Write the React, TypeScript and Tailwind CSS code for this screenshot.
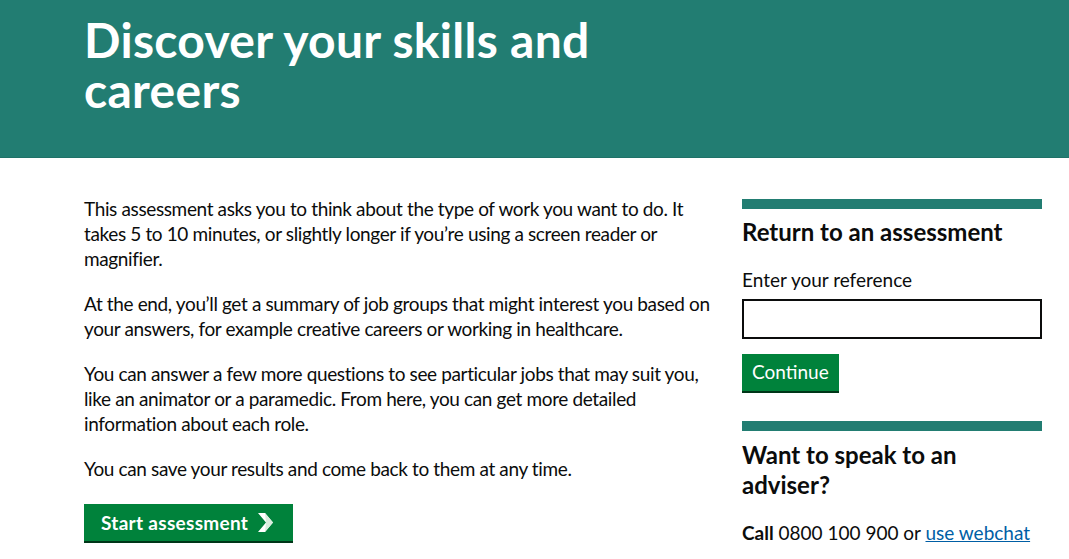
import React from "react";

const font = { fontFamily: "Lato, 'Liberation Sans', Arial, sans-serif" };

function Chevron() {
  return (
    <svg width="17" height="21" viewBox="0 0 17 21" className="ml-[9px]">
      <path d="M1 1 L8 1 L16 10.5 L8 20 L1 20 L9 10.5 Z" fill="#ffffff" />
      <path d="M8 1 L16 10.5 L8 20 L9 10.5 Z" fill="#d9eedf" />
    </svg>
  );
}

export default function App() {
  return (
    <div className="min-h-[559px] bg-white text-[#0b0c0c]" style={font}>
      <header className="h-[158px] bg-[#227d72] border-b border-[#1f7268] pl-[84px] pt-[15px]">
        <h1 className="text-[48px] font-bold leading-[50px] text-white tracking-[0.3px]">
          Discover your skills and
          <br />
          careers
        </h1>
      </header>
      <main className="flex pl-[84px] pt-[38px]">
        <div className="w-[628px] whitespace-nowrap text-[19px] leading-[25px] tracking-[-0.37px]">
          <p>
            This assessment asks you to think about the type of work you want to do. It
            <br />
            takes 5 to 10 minutes, or slightly longer if you’re using a screen reader or
            <br />
            magnifier.
          </p>
          <p className="mt-[20px]">
            At the end, you’ll get a summary of job groups that might interest you based on
            <br />
            your answers, for example creative careers or working in healthcare.
          </p>
          <p className="mt-[20px]">
            You can answer a few more questions to see particular jobs that may suit you,
            <br />
            like an animator or a paramedic. From here, you can get more detailed
            <br />
            information about each role.
          </p>
          <p className="mt-[20px]">You can save your results and come back to them at any time.</p>
          <button className="mt-[23px] flex h-[37px] w-[209px] items-center bg-[#00823b] pl-[17px] text-[19px] font-bold tracking-[0.3px] text-white shadow-[0_2px_0_#003618]">
            Start assessment
            <Chevron />
          </button>
        </div>
        <aside className="ml-[30px] mt-[3px] w-[300px]">
          <div className="border-t-[10px] border-[#227d72] pt-[8px]">
            <h2 className="text-[24px] font-bold leading-[30px]">Return to an assessment</h2>
            <label className="mt-[20px] block text-[19px] leading-[25px]">Enter your reference</label>
            <input className="mt-[7px] block h-[40px] w-[300px] border-2 border-[#0b0c0c] outline-none" />
            <button className="mt-[15px] h-[37px] bg-[#00823b] px-[10px] text-[19px] text-white shadow-[0_2px_0_#003618]">
              Continue
            </button>
          </div>
          <div className="mt-[30px] border-t-[10px] border-[#227d72] pt-[9px]">
            <h2 className="text-[24px] font-bold leading-[30px]">Want to speak to an<br />adviser?</h2>
            <p className="mt-[20px] text-[19px] leading-[25px]">
              <span className="font-bold">Call</span> 0800 100 900 or{" "}
              <a href="#" className="text-[#005ea5] underline">use webchat</a>
            </p>
          </div>
        </aside>
      </main>
    </div>
  );
}
